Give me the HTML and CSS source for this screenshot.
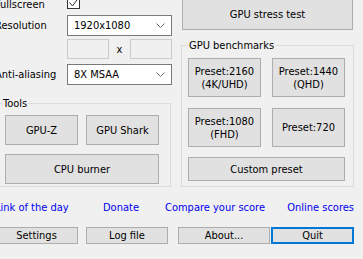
FILE: index.html
```html
<!DOCTYPE html>
<html>
<head>
<meta charset="utf-8">
<link rel="stylesheet" href="styles.css">
</head>
<body>
<div class="window">
  <div class="top">
    <div class="col-left">
      <div class="form">
        <div class="field f-full">
          <span class="lbl">Fullscreen</span>
          <span class="check"><svg width="11" height="11" viewBox="0 0 11 11"><polyline points="1.5,5.5 4.5,9 10,1.5" fill="none" stroke="#333" stroke-width="1"/></svg></span>
        </div>
        <div class="field f-res">
          <span class="lbl">Resolution</span>
          <div class="select"><span class="val">1920x1080</span><svg class="chev" width="9" height="5" viewBox="0 0 9 5"><polyline points="0.5,0.5 4.5,4.5 8.5,0.5" fill="none" stroke="#6d6d6d" stroke-width="1"/></svg></div>
        </div>
        <div class="field f-dims">
          <span class="lbl"></span>
          <div class="dims"><span class="input"></span><span class="times">x</span><span class="input"></span></div>
        </div>
        <div class="field f-aa">
          <span class="lbl">Anti-aliasing</span>
          <div class="select"><span class="val">8X MSAA</span><svg class="chev" width="9" height="5" viewBox="0 0 9 5"><polyline points="0.5,0.5 4.5,4.5 8.5,0.5" fill="none" stroke="#6d6d6d" stroke-width="1"/></svg></div>
        </div>
      </div>
      <fieldset class="group tools">
        <legend>Tools</legend>
        <div class="tools-grid">
          <button class="btn">GPU-Z</button>
          <button class="btn">GPU Shark</button>
          <button class="btn wide">CPU burner</button>
        </div>
      </fieldset>
    </div>
    <div class="col-right">
      <button class="btn stress">GPU stress test</button>
      <fieldset class="group bench">
        <legend>GPU benchmarks</legend>
        <div class="bench-grid">
          <button class="btn preset">Preset:2160<br>(4K/UHD)</button>
          <button class="btn preset">Preset:1440<br>(QHD)</button>
          <button class="btn preset row2">Preset:1080<br>(FHD)</button>
          <button class="btn preset row2">Preset:720</button>
          <button class="btn custom">Custom preset</button>
        </div>
      </fieldset>
    </div>
  </div>
  <div class="links">
    <a class="link">Link of the day</a>
    <a class="link">Donate</a>
    <a class="link">Compare your score</a>
    <a class="link last">Online scores</a>
  </div>
  <div class="actions">
    <button class="btn act settings">Settings</button>
    <button class="btn act logfile">Log file</button>
    <button class="btn act about">About...</button>
    <button class="btn act quit">Quit</button>
  </div>
</div>
</body>
</html>
```
FILE: styles.css
```css
html, body {
  margin: 0;
  padding: 0;
}
body {
  background: #f0f0f0;
  width: 363px;
  height: 259px;
  overflow: hidden;
  font-family: "DejaVu Sans Condensed", "DejaVu Sans", sans-serif;
  font-stretch: condensed;
  font-size: 11px;
  line-height: 13px;
  color: #000;
}
.window {
  margin: -4px 0 0 -5px;
  width: 368px;
}
.top {
  display: grid;
  grid-template-columns: 177px 173px;
  column-gap: 9px;
  align-items: start;
}
.field {
  display: flex;
  align-items: center;
}
.lbl {
  width: 72px;
  flex: none;
  white-space: nowrap;
}
.f-full {
  height: 13px;
  align-items: flex-start;
}
.f-full .lbl { margin-top: 2px; }
.f-res { margin-top: 6px; height: 21px; }
.f-dims { margin-top: 3px; height: 20px; }
.f-aa { margin-top: 5px; height: 21px; }
.check {
  width: 11px;
  height: 11px;
  border: 1px solid #333;
  background: #fff;
  display: block;
}
.check svg { display: block; }
.select {
  box-sizing: border-box;
  width: 105px;
  height: 21px;
  border: 1px solid #7a7a7a;
  background: #fff;
  display: flex;
  align-items: center;
  justify-content: space-between;
  padding: 0 6px 0 6px;
}
.chev { display: block; }
.dims {
  display: flex;
  align-items: center;
  width: 105px;
}
.input {
  box-sizing: border-box;
  width: 42px;
  height: 20px;
  border: 1px solid #cccccc;
  background: #f0f0f0;
}
.times {
  flex: 1;
  text-align: center;
}
.group {
  margin: 0;
  padding: 0;
  border: 1px solid #dcdcdc;
  min-width: 0;
  box-sizing: border-box;
}
.group legend {
  margin-left: 6px;
  padding: 0 1px;
  line-height: 13px;
}
.tools {
  margin-top: 12px;
  width: 176px;
}
.tools-grid {
  display: grid;
  grid-template-columns: 73px 73px;
  grid-auto-rows: 30px;
  column-gap: 8px;
  row-gap: 9px;
  padding: 5px 11px 2px 9px;
}
.wide { grid-column: 1 / 3; }
.btn {
  box-sizing: border-box;
  margin: 0;
  padding: 0;
  background: #e1e1e1;
  border: 1px solid #adadad;
  font: inherit;
  line-height: 13px;
  color: #000;
  text-align: center;
}
.stress {
  display: block;
  margin: 2px 1px 0 1px;
  width: 171px;
  height: 32px;
}
.bench {
  margin-top: 9px;
  width: 173px;
}
.bench-grid {
  display: grid;
  grid-template-columns: 73px 73px;
  grid-template-rows: 39px 50px 34px;
  column-gap: 11px;
  padding: 6px 8px 5px 6px;
}
.row2 { margin-top: 11px; }
.custom {
  grid-column: 1 / 3;
  margin-top: 10px;
}
.links {
  margin-top: 14px;
  display: grid;
  grid-template-columns: 108px 62px 125px 64px;
  white-space: nowrap;
}
.link { color: #0000ee; }
.last { justify-self: end; }
.actions {
  margin-top: 13px;
  display: flex;
}
.act {
  flex: none;
  height: 17px;
}
.settings { width: 83px; }
.logfile { width: 82px; margin-left: 8px; }
.about { width: 92px; margin-left: 10px; }
.quit {
  width: 83px;
  margin-left: 1px;
  border: 2px solid #0078d7;
}
```
